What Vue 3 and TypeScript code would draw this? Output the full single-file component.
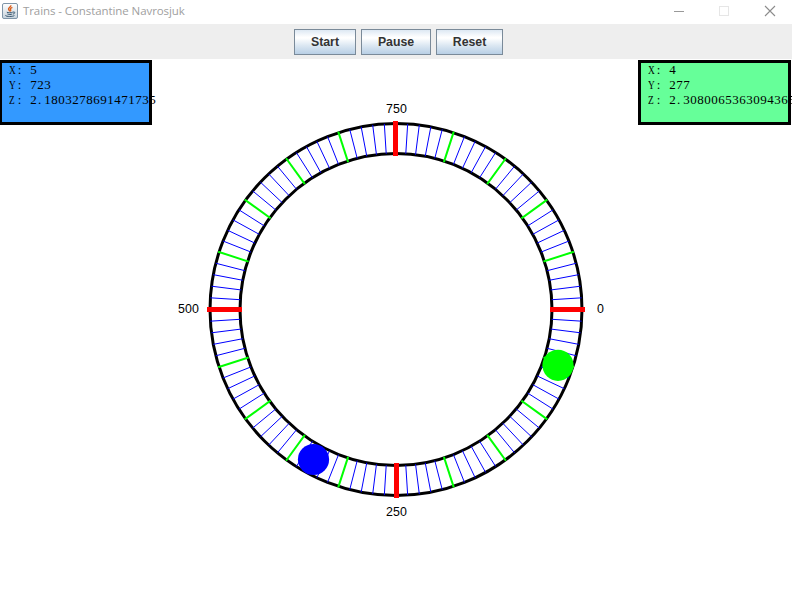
<script setup lang="ts">
interface Tick { x1: number; y1: number; x2: number; y2: number; kind: string }
interface Train { id: string; rows: { key: string; value: string }[] }

const cx = 396
const cy = 250.5
const inner = 156
const outer = 186

const ticks: Tick[] = []
for (let i = 0; i < 100; i++) {
  if (i % 25 === 0) continue
  const a = (i * 3.6 * Math.PI) / 180
  ticks.push({
    x1: cx + inner * Math.cos(a),
    y1: cy + inner * Math.sin(a),
    x2: cx + outer * Math.cos(a),
    y2: cy + outer * Math.sin(a),
    kind: i % 5 === 0 ? 'major' : 'minor',
  })
}
ticks.sort((a, b) => b.kind.localeCompare(a.kind))

const buttons: string[] = ['Start', 'Pause', 'Reset']

const trains: Train[] = [
  {
    id: 'blue',
    rows: [
      { key: 'X', value: '5' },
      { key: 'Y', value: '723' },
      { key: 'Z', value: '2.1803278691471735' },
    ],
  },
  {
    id: 'green',
    rows: [
      { key: 'X', value: '4' },
      { key: 'Y', value: '277' },
      { key: 'Z', value: '2.3080065363094365' },
    ],
  },
]
</script>

<template>
  <div class="window">
    <header class="titlebar">
      <svg class="java" width="16" height="16" viewBox="0 0 16 16">
        <defs>
          <linearGradient id="tile" x1="0" y1="0" x2="0" y2="1">
            <stop offset="0" stop-color="#fff" />
            <stop offset="1" stop-color="#c6d2dc" />
          </linearGradient>
        </defs>
        <rect x="0.5" y="0.5" width="15" height="15" rx="1.5" fill="url(#tile)" stroke="#7f95a8" />
        <path d="M8.8 2.2C9.4 4 5.8 4.6 6.6 6.4C6.9 7.1 7.6 7.5 7.7 8.4M10.4 4.3C8.6 5 7.9 5.7 8.6 6.7C9 7.3 8.7 7.8 8.4 8.3" fill="none" stroke="#d9601f" stroke-width="1.4" />
        <path d="M4.8 9.2C6 10 9.5 9.9 10.8 9.1M5.4 11C6.6 11.7 9 11.6 10.2 11M3.4 12.4C4.2 13.8 11 13.8 12.4 12.5M11 9.1C13.4 8.4 13.4 10.6 10.9 11.1" fill="none" stroke="#36566f" stroke-width="1" />
      </svg>
      <span class="title">Trains - Constantine Navrosjuk</span>
      <svg class="controls" width="138" height="24" viewBox="0 0 138 24">
        <path d="M20 11.5H30" stroke="#999" />
        <rect x="65.5" y="6.5" width="9" height="9" fill="none" stroke="#e6e6e6" />
        <path d="M111 6L121 16M121 6L111 16" stroke="#8c8c8c" stroke-width="1.1" />
      </svg>
    </header>

    <nav class="toolbar">
      <button v-for="b in buttons" :key="b" type="button" :class="b.toLowerCase()">{{ b }}</button>
    </nav>

    <main class="stage">
      <svg class="dial" width="792" height="535" viewBox="0 0 792 535">
        <circle :cx="cx" :cy="cy" :r="outer" class="rail" />
        <circle :cx="cx" :cy="cy" :r="inner" class="rail" />
        <line v-for="(t, i) in ticks" :key="i" :x1="t.x1" :y1="t.y1" :x2="t.x2" :y2="t.y2" :class="t.kind" />
        <path class="quarter" d="M550 250.5H585M207 250.5H242M395.5 62V97M396.5 404V439" />
        <circle cx="558" cy="306.3" r="15.6" fill="#00ff00" />
        <circle cx="313.5" cy="400.5" r="15.6" fill="#0000ff" />
        <text x="597" y="254">0</text>
        <text x="386" y="457">250</text>
        <text x="178" y="254">500</text>
        <text x="386" y="54">750</text>
      </svg>
      <div class="cards">
        <section v-for="t in trains" :key="t.id" class="card" :class="t.id">
          <div v-for="r in t.rows" :key="r.key" class="row">
            <span class="key"><i class="axis">{{ r.key }}</i><i class="colon">:</i></span>
            <span class="value"><i v-for="(c, n) in r.value.split('')" :key="n" :class="{ dot: c === '.' }">{{ c }}</i></span>
          </div>
        </section>
      </div>
    </main>
  </div>
</template>

<style>
body { background: #fff; overflow: hidden; }
</style>

<style scoped>
.window { width: 792px; height: 594px; display: flex; flex-direction: column; overflow: hidden; background: #fff; }
.titlebar { height: 24px; flex: none; display: flex; align-items: center; padding-left: 2px; box-sizing: border-box; }
.java { margin-bottom: 2px; }
.title { margin-left: 5px; font: 11.5px/22px "Open Sans", sans-serif; color: #a0a0a0; white-space: nowrap; height: 24px; letter-spacing: -0.08px; }
.controls { margin-left: auto; }
.toolbar { height: 35px; flex: none; display: flex; justify-content: center; gap: 5px; padding: 5px 0 4px 5px; box-sizing: border-box; background: #eee; }
button { height: 26px; margin: 0; padding: 0; border: 1px solid #7a8a99; background: linear-gradient(#dde8f3 0%, #fff 30%, #fff 34%, #dbe7f2 65%, #b8cfe5 100%); font: bold 12.3px/24px "Liberation Sans", Arial, sans-serif; color: #333; box-sizing: border-box; }
.start { width: 62px; }
.pause { width: 70px; }
.reset { width: 67px; }
.stage { height: 535px; display: grid; overflow: hidden; }
.dial, .cards { grid-area: 1 / 1; }
.rail { fill: none; stroke: #000; stroke-width: 3; }
.minor { stroke: #0000ff; stroke-width: 1; }
.major { stroke: #00ff00; stroke-width: 2; stroke-linecap: square; }
.quarter { fill: none; stroke: #f00; stroke-width: 5; }
.dial text { font: 12.4px "Liberation Sans", Arial, sans-serif; fill: #000; letter-spacing: 0.1px; }
.cards { display: flex; justify-content: space-between; align-items: flex-start; margin: 1px 1px 0 -1px; z-index: 1; }
.card { width: 153px; height: 65px; box-sizing: border-box; border: 3px solid #000; padding: 0 0 0 7px; }
.card.blue { background: #3399ff; }
.card.green { background: #66ff99; }
.row { display: flex; height: 15px; font: 13px/14px "Liberation Serif", serif; white-space: pre; color: #000; }
.row i { display: block; width: 7px; flex: none; font-style: normal; text-align: center; }
.key { display: flex; width: 21px; flex: none; }
.key .axis { text-align: left; transform: scaleX(0.72); transform-origin: 0 50%; }
.value { display: flex; }
.value .dot { text-align: left; text-indent: 1px; }
</style>
